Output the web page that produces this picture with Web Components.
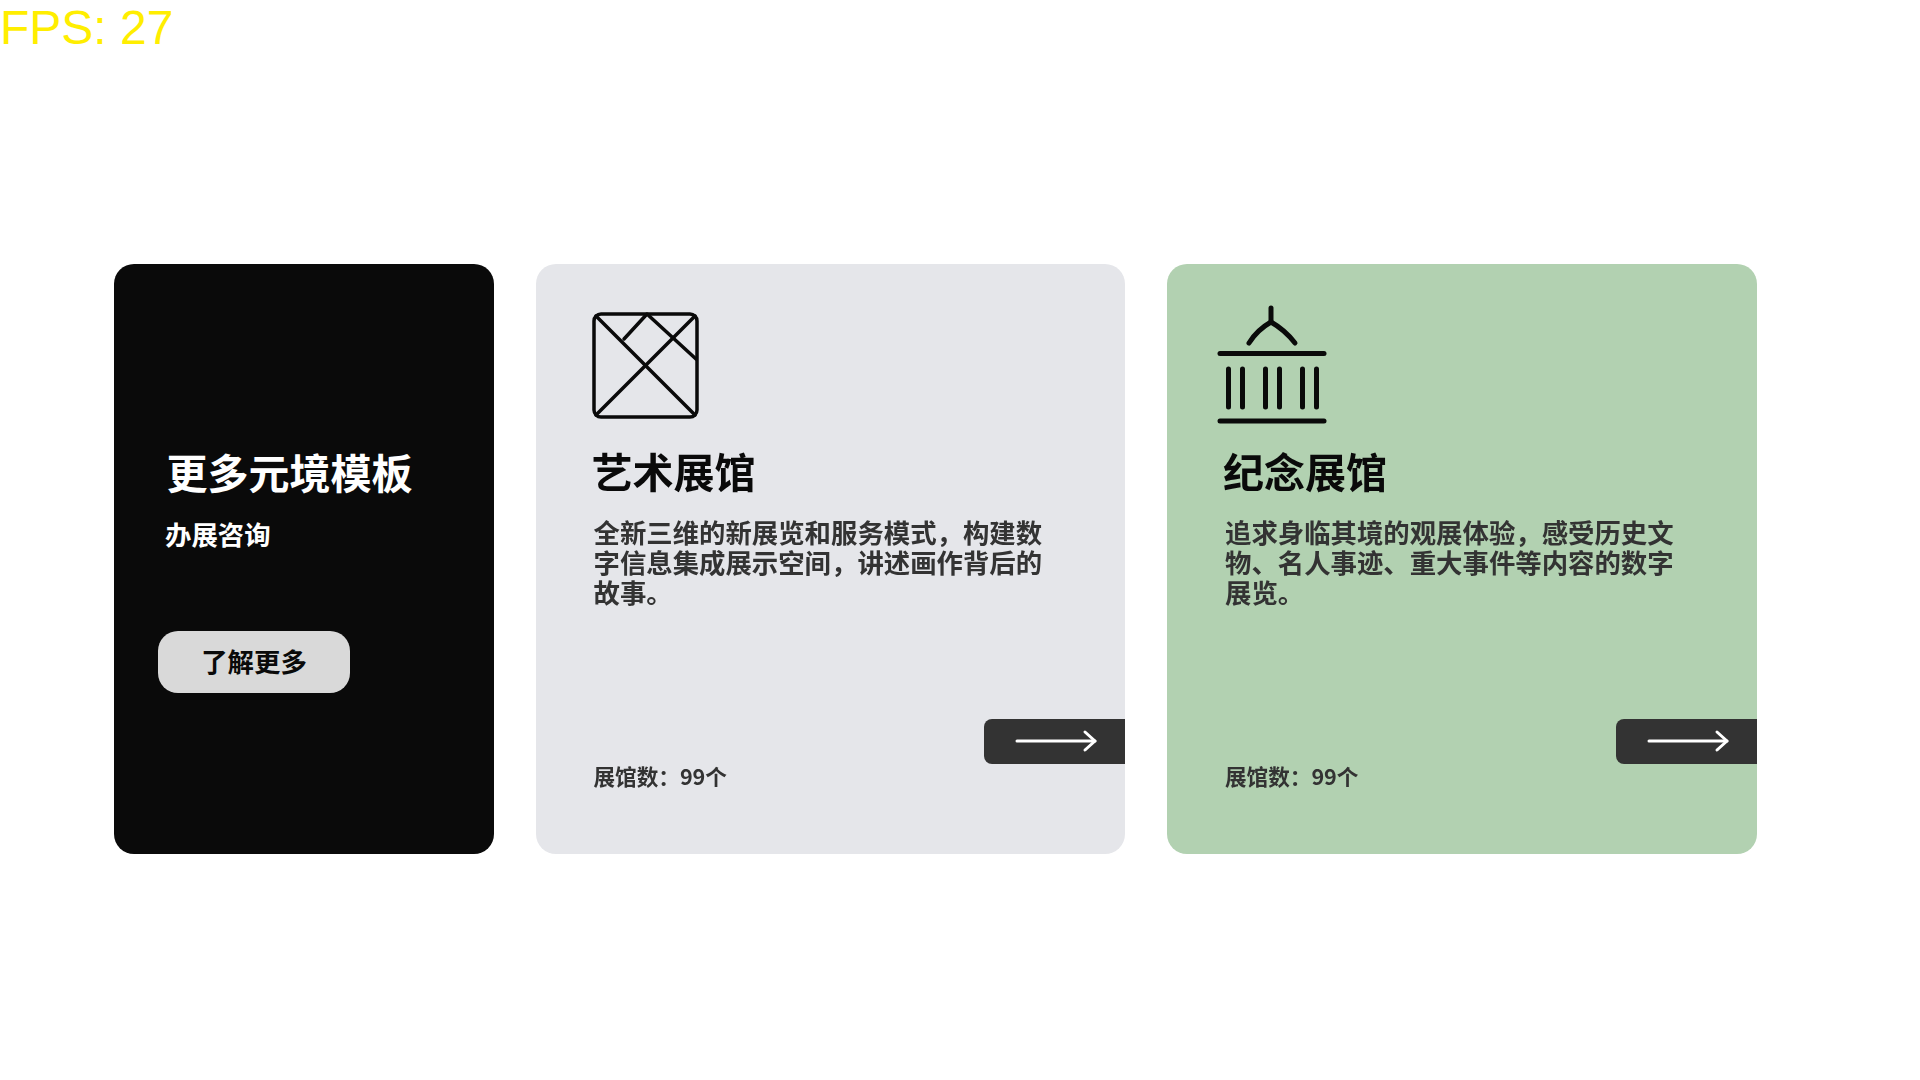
<!DOCTYPE html>
<html lang="zh">
<head>
<meta charset="utf-8">
<title>元境模板</title>
<style>
  html, body { margin: 0; height: 100%; background: #fff; overflow: hidden; }
  body { font-family: "Liberation Sans", "Noto Sans CJK SC", sans-serif; }
  .row {
    display: flex;
    gap: 42px;
    padding: 264px 0 0 113.500px;
    filter: blur(0.5px);
  }
</style>
</head>
<body>
<fps-counter value="27"></fps-counter>

<div class="row">
  <promo-card heading="更多元境模板" sub="办展咨询" action="了解更多"></promo-card>

  <hall-card heading="艺术展馆" count="展馆数：99个" tint="#e5e6ea">
    <svg slot="icon" viewBox="0 0 106 106" fill="none" stroke="#0a0a0a" stroke-width="3.500" stroke-linecap="round" stroke-linejoin="round">
      <rect x="0" y="2" width="103" height="103" rx="7"/>
      <path d="M2 4L101 103"/>
      <path d="M2 103L101 4"/>
      <path d="M30 27L53 2L102 47"/>
    </svg>
    全新三维的新展览和服务模式，构建数字信息集成展示空间，讲述画作背后的故事。
  </hall-card>

  <hall-card heading="纪念展馆" count="展馆数：99个" tint="#b2d1b1">
    <svg slot="icon" viewBox="0 0 106 106" fill="none" stroke="#0a0a0a" stroke-width="5" stroke-linecap="round" stroke-linejoin="round">
      <path d="M46 -4V10"/>
      <path d="M24 31Q32 18 46 10Q60 18 70 31"/>
      <path d="M-5 41.500H99"/>
      <path d="M3.500 57V95M17.500 57V95M40.500 57V95M54.500 57V95M77.500 57V95M91.500 57V95"/>
      <path d="M-5 109H99"/>
    </svg>
    追求身临其境的观展体验，感受历史文物、名人事迹、重大事件等内容的数字展览。
  </hall-card>
</div>

<script>
const CJK = '"Noto Sans CJK SC", "Liberation Sans", sans-serif';

class FpsCounter extends HTMLElement {
    constructor() {
        super();
        this.attachShadow({ mode: "open" });
    }

    connectedCallback() {
        this.shadowRoot.innerHTML = `
      <style>
        :host {
          position: absolute;
          top: 0;
          left: 0;
          font: 48px/55px "Liberation Sans", sans-serif;
          color: #ffee00;
        }
      </style>
      FPS: ${this.getAttribute("value")}
    `;
    }
}

class ArrowTab extends HTMLElement {
    constructor() {
        super();
        this.attachShadow({ mode: "open" });
    }

    connectedCallback() {
        this.shadowRoot.innerHTML = `
      <style>
        :host {
          display: flex;
          align-items: center;
          justify-content: flex-end;
          box-sizing: border-box;
          width: 141px;
          height: 45px;
          padding: 0 27px 2px 0;
          background: #333;
          border-radius: 8px 0 0 8px;
        }
        svg { display: block; }
      </style>
      <svg width="84" height="24" viewBox="0 0 84 24" fill="none" stroke="#fff" stroke-width="3" stroke-linecap="round" stroke-linejoin="round">
        <path d="M3 12H81"/>
        <path d="M71 3L81 12L71 21"/>
      </svg>
    `;
    }
}

class HallCard extends HTMLElement {
    constructor() {
        super();
        this.attachShadow({ mode: "open" });
    }

    connectedCallback() {
        this.shadowRoot.innerHTML = `
      <style>
        :host {
          display: flex;
          flex-direction: column;
          box-sizing: border-box;
          width: 589.500px;
          height: 590px;
          padding: 48px 58px 66px;
          border-radius: 20px;
          background: ${this.getAttribute("tint")};
          font-family: ${CJK};
          color: #333;
        }
        .icon { width: 106px; height: 106px; }
        ::slotted(svg) { display: block; width: 106px; height: 106px; overflow: visible; }
        h2 {
          margin: 24px 0 0 -2px;
          font-size: 41px;
          line-height: 56px;
          font-weight: 700;
          color: #0a0a0a;
        }
        .text {
          width: 460px;
          margin-top: 19px;
          font-size: 26.400px;
          line-height: 30px;
          font-weight: 700;
        }
        arrow-tab { align-self: flex-end; margin: auto -58px 0 0; }
        .count { font-size: 21.600px; line-height: 24px; font-weight: 700; }
      </style>
      <div class="icon"><slot name="icon"></slot></div>
      <h2>${this.getAttribute("heading")}</h2>
      <div class="text"><slot></slot></div>
      <arrow-tab></arrow-tab>
      <div class="count">${this.getAttribute("count")}</div>
    `;
    }
}

class PromoCard extends HTMLElement {
    constructor() {
        super();
        this.attachShadow({ mode: "open" });
    }

    connectedCallback() {
        this.shadowRoot.innerHTML = `
      <style>
        :host {
          display: flex;
          flex-direction: column;
          align-items: flex-start;
          box-sizing: border-box;
          width: 380px;
          height: 590px;
          padding: 179px 0 0 45px;
          border-radius: 20px;
          background: #0a0a0a;
          font-family: ${CJK};
          color: #fff;
        }
        h2 {
          margin: 0 0 0 8px;
          font-size: 41px;
          line-height: 56px;
          font-weight: 700;
        }
        .sub {
          margin: 17px 0 0 6.500px;
          font-size: 26.400px;
          line-height: 36px;
          font-weight: 700;
        }
        button {
          width: 192px;
          height: 62px;
          margin: 78.500px 0 0 -0.500px;
          padding: 0 0 2px;
          border: none;
          border-radius: 20px;
          background: #d9d9d9;
          color: #0a0a0a;
          font: 700 26.400px/60px ${CJK};
        }
      </style>
      <h2>${this.getAttribute("heading")}</h2>
      <div class="sub">${this.getAttribute("sub")}</div>
      <button>${this.getAttribute("action")}</button>
    `;
    }
}

customElements.define("fps-counter", FpsCounter);
customElements.define("arrow-tab", ArrowTab);
customElements.define("hall-card", HallCard);
customElements.define("promo-card", PromoCard);
</script>
</body>
</html>
